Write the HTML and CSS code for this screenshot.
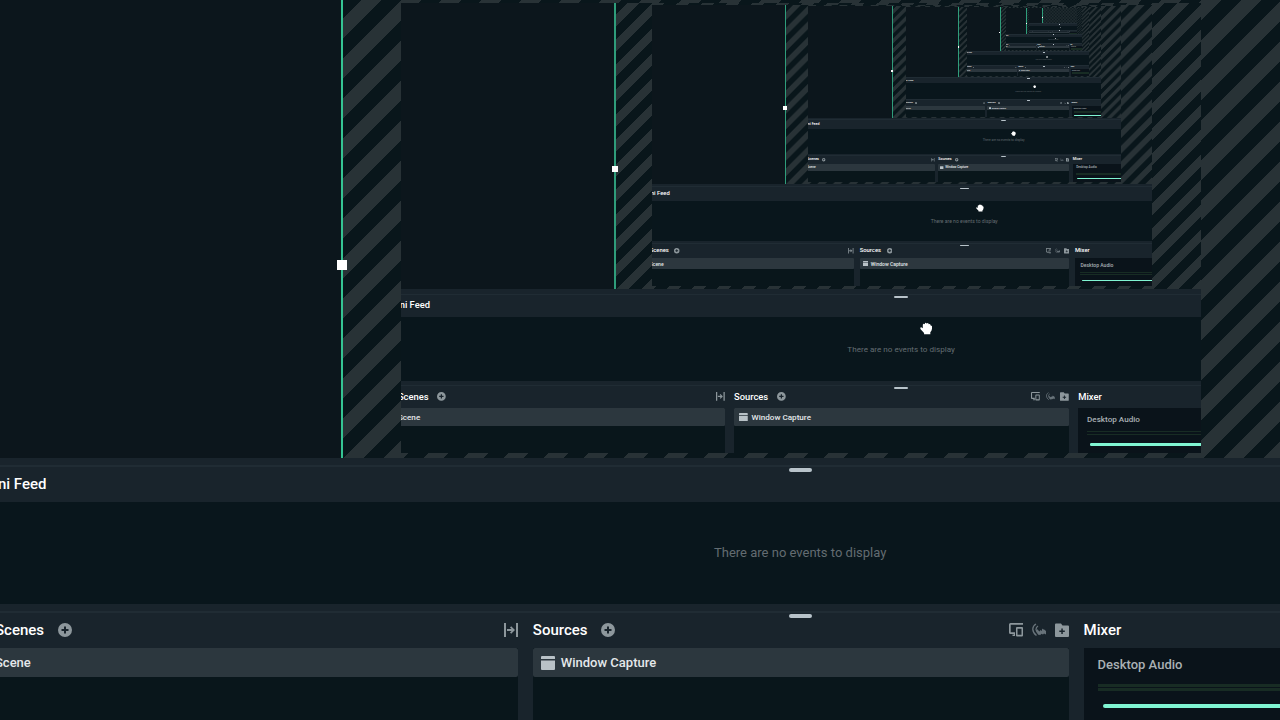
FILE: index.html
```html
<!DOCTYPE html>
<html lang="en">
<head>
<meta charset="utf-8">
<meta name="viewport" content="width=device-width, initial-scale=1">
<title>Editor</title>
<link rel="stylesheet" href="styles.css">
</head>
<body>
<main class="app">
  <section class="canvas" aria-label="Preview">
    <div class="backdrop"></div>
    <div class="guide"><span class="guide-handle"></span></div>
  </section>

  <div class="workspace">
    <section class="feed">
      <div class="divider"><span class="grip"></span></div>
      <header class="bar"><h2 class="title">Mini Feed</h2></header>
      <p class="feed-empty">There are no events to display</p>
    </section>

    <section class="docks">
      <div class="divider"><span class="grip"></span></div>
      <div class="columns">
        <section class="dock">
          <header class="bar">
            <h2 class="title">Scenes</h2>
            <button class="icon-button" type="button" aria-label="Add scene">
              <svg class="icon" viewBox="0 0 14 14"><path fill-rule="evenodd" d="M7 0a7 7 0 1 0 0 14A7 7 0 0 0 7 0zM6 3.500h2V6h2.500v2H8v2.500H6V8H3.500V6H6z"/></svg>
            </button>
            <div class="tools">
              <button class="icon-button" type="button" aria-label="Scene transitions">
                <svg class="icon" viewBox="0 0 14 14"><path d="M0 0h2v14H0zM12 0h2v14h-2zM3 6h4.500L6 4.400l1.200-1.200L11 7l-3.800 3.800L6 9.600 7.500 8H3z"/></svg>
              </button>
            </div>
          </header>
          <ul class="list"><li class="row">Scene</li></ul>
        </section>

        <section class="dock">
          <header class="bar">
            <h2 class="title">Sources</h2>
            <button class="icon-button" type="button" aria-label="Add source">
              <svg class="icon" viewBox="0 0 14 14"><path fill-rule="evenodd" d="M7 0a7 7 0 1 0 0 14A7 7 0 0 0 7 0zM6 3.500h2V6h2.500v2H8v2.500H6V8H3.500V6H6z"/></svg>
            </button>
            <div class="tools">
              <button class="icon-button" type="button" aria-label="Dual output">
                <svg class="icon" viewBox="0 0 14 14"><path fill-rule="evenodd" d="M1.500 0H14v1.700H1.700v7.600H6V13H3.500v-1.500H5V11H1.500A1.500 1.500 0 0 1 0 9.500v-8A1.500 1.500 0 0 1 1.500 0zM8 4h5a1 1 0 0 1 1 1v7.500a1 1 0 0 1-1 1H8a1 1 0 0 1-1-1V5a1 1 0 0 1 1-1zM8.500 5.700v6h4v-6z"/></svg>
              </button>
              <button class="icon-button dim" type="button" aria-label="Selective recording">
                <svg class="icon" viewBox="0 0 14 14"><path fill="none" stroke="currentColor" stroke-width="1.300" d="M4 1C-.5 3.500-.2 9 4.500 12.500M6 3C3 5 3.500 8 7 11.500"/><path d="M5 6l2.500 2.500 1-1.500 1.500 1V5.500l1.500 1.200V6l2.500 2v3.500l-2-1-1 1-1.500-.8-1.500 1.500C6 11.500 4.500 9 5 6z"/></svg>
              </button>
              <button class="icon-button" type="button" aria-label="Add folder">
                <svg class="icon" viewBox="0 0 14 14"><path fill-rule="evenodd" d="M1 .5h5L7.500 2.500H13a1 1 0 0 1 1 1V13a1 1 0 0 1-1 1H1a1 1 0 0 1-1-1V1.500a1 1 0 0 1 1-1zM6.300 5.500v2h-2V9h2v2h1.500V9h2V7.500h-2v-2z"/></svg>
              </button>
            </div>
          </header>
          <ul class="list">
            <li class="row">
              <svg class="icon source-icon" viewBox="0 0 14 14"><path d="M1 0h12a1 1 0 0 1 1 1v2H0V1a1 1 0 0 1 1-1zM0 4.500h14V13a1 1 0 0 1-1 1H1a1 1 0 0 1-1-1z"/></svg>
              <span>Window Capture</span>
            </li>
          </ul>
        </section>

        <section class="dock">
          <header class="bar"><h2 class="title">Mixer</h2></header>
          <div class="mixer">
            <label class="channel">
              <span>Desktop Audio</span>
              <span class="meter"></span>
              <input class="volume" type="range" min="0" max="100" value="100">
            </label>
          </div>
        </section>
      </div>
    </section>
  </div>
</main>
<script src="app.js"></script>
</body>
</html>
```

FILE: styles.css
```css
* { box-sizing: border-box; }

html, body { height: 100%; margin: 0; background: #09161c; }

body {
  font-family: Roboto, "Liberation Sans", sans-serif;
  font-size: 13px;
  line-height: 16px;
  font-weight: 500;
  color: #e4e8ea;
  overflow: hidden;
}

h2, p, ul { margin: 0; padding: 0; }

.app {
  position: relative;
  display: flex;
  flex-direction: column;
  width: 100%;
  height: 100%;
  overflow: hidden;
  background: #09161c;
}

/* Captured window shown inside the preview canvas */
.captured {
  position: absolute;
  left: 401px;
  top: 3px;
  width: 62.5%;
  height: 62.5%;
}

.captured > .app { zoom: 0.625; }

.pointer {
  position: absolute;
  left: 830px;
  top: 511px;
  width: 20px;
  height: 20px;
}

/* Preview */
.canvas {
  flex: 1;
  display: flex;
  min-height: 0;
  background-color: #09161b;
  background-image: linear-gradient(135deg,
    transparent 2.5%, #283236 2.5%, #283236 27.5%,
    transparent 27.5%, transparent 52.5%,
    #283236 52.5%, #283236 77.5%, transparent 77.5%);
  background-size: 40px 40px;
}

.backdrop { width: 341px; background: #0c161c; }

.guide { position: relative; width: 2px; background: #35c493; }

.captured .guide { width: 3px; background: #2f9d7b; }

.guide-handle {
  position: absolute;
  left: -4px;
  top: 260px;
  width: 10px;
  height: 10px;
  background: #fff;
}

/* Panels */
.workspace {
  flex: none;
  width: 128%;
  margin-left: -19px;
}

.divider {
  display: flex;
  justify-content: center;
  height: 9px;
  background: #19242c;
  border-bottom: 2px solid #202c34;
}

.grip {
  flex: none;
  position: relative;
  top: 10px;
  width: 23px;
  height: 4px;
  border-radius: 2px;
  background: #b8c3ca;
}

.bar {
  display: flex;
  align-items: center;
  gap: 14px;
  height: 35px;
  padding-bottom: 1px;
  background: #19242c;
}

.title {
  font-size: 15px;
  line-height: 20px;
  font-weight: 500;
  color: #fff;
}

.feed-empty {
  display: flex;
  align-items: center;
  justify-content: center;
  height: 102px;
  font-weight: 400;
  color: #636c71;
}

.docks { background: #19242c; }

.columns {
  display: grid;
  grid-template-columns: 523fr 536fr 536fr;
  gap: 15px;
  padding-left: 14px;
}

.dock { min-width: 0; }

.tools { display: flex; gap: 9px; margin-left: auto; }

.icon-button {
  display: flex;
  padding: 0;
  border: 0;
  background: none;
  color: #8d979c;
}

.icon { display: block; width: 14px; height: 14px; fill: currentColor; }

.dim { color: #68737a; }

.list {
  height: 72px;
  list-style: none;
  background: #09161b;
}

.row {
  display: flex;
  align-items: center;
  gap: 6px;
  height: 29px;
  border-radius: 2px;
  background: #2c373e;
}

.source-icon { margin-left: 8px; color: #b9c2c7; }

.mixer {
  height: 72px;
  padding: 9px 14px;
  background: #0a131a;
  color: #a9b0b4;
}

.channel { display: flex; flex-direction: column; }

.meter {
  height: 7px;
  margin-top: 11px;
  border: solid #182c24;
  border-width: 3px 0;
}

.volume {
  appearance: none;
  height: 4px;
  margin: 13px 0 0 5px;
  border-radius: 2px;
  background: #80f5d2;
}

.volume::-webkit-slider-thumb { appearance: none; width: 4px; height: 4px; opacity: 0; }
```

FILE: app.js
```js
// The preview captures the editor's own window, so it repeats inside itself.
const DEPTH = 7;
const root = document.querySelector('.app');
const snapshot = root.cloneNode(true);
const pointer = '<svg class="pointer" viewBox="0 0 20 20"><path fill="#fff" d="M4.500 4.500Q5.500 2 7.500 3.500Q8.500-.2 10.500 2.500Q13 .2 14 3.500Q16.500 2.500 17 5.500Q20 5.500 19.300 10Q19 14 16.500 16.500V19.500H6.500V17.500L1 11.500Q-.5 8.500 2 8.500L4.500 10Z"/></svg>';

let host = root;
for (let level = 1; level <= DEPTH; level += 1) {
  const frame = document.createElement('div');
  frame.className = 'captured';
  frame.inert = true;
  const copy = snapshot.cloneNode(true);
  copy.insertAdjacentHTML('beforeend', pointer);
  frame.append(copy);
  host.append(frame);
  host = copy;
}
```
